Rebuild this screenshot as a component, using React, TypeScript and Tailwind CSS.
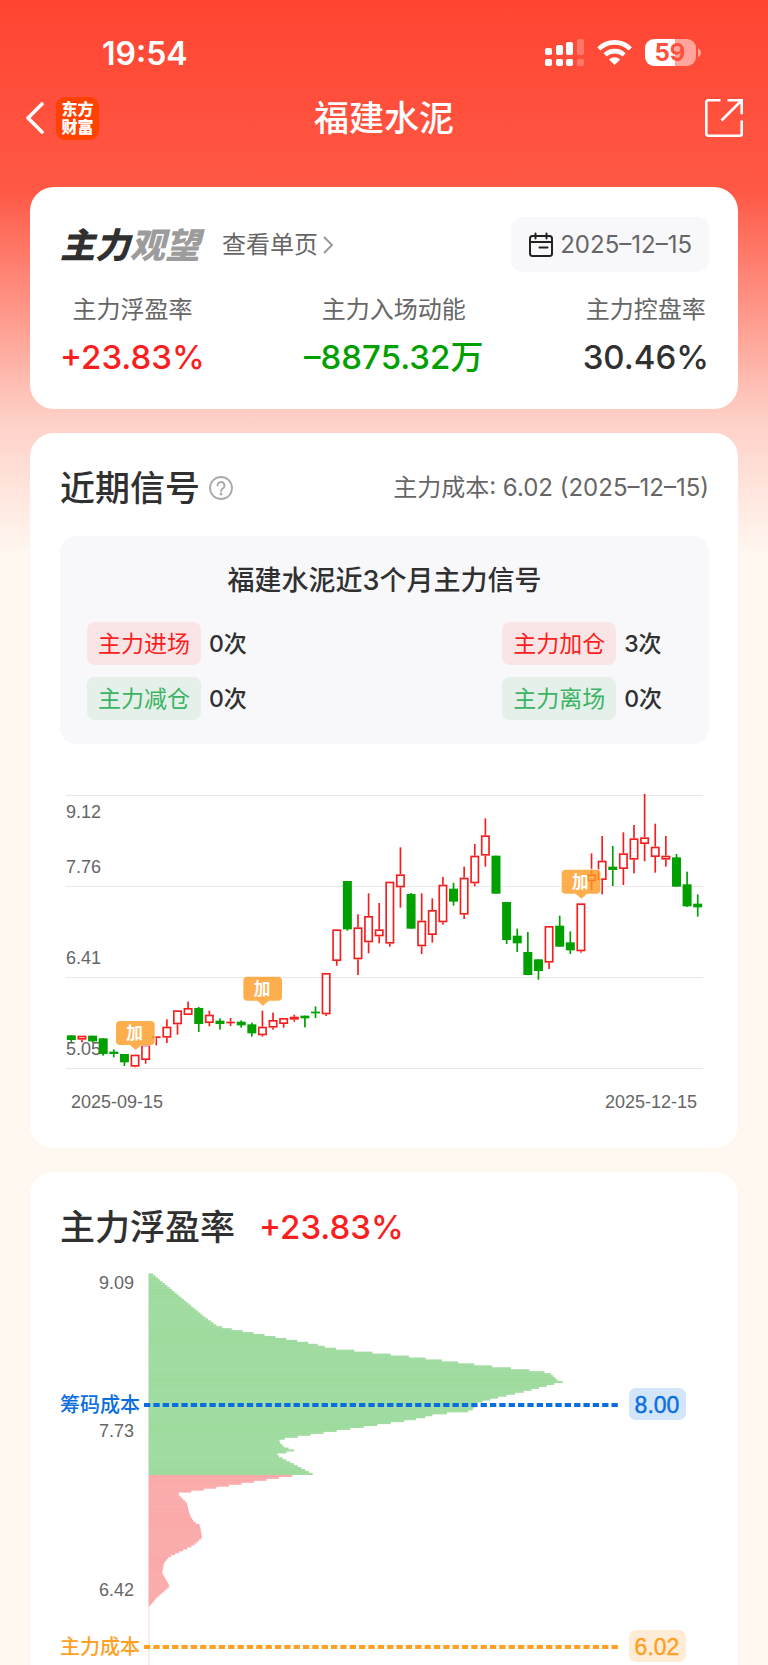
import type { ReactNode } from "react";

/* ================= DATA ================= */

type Candle = [color: "r" | "g", top: number, bottom: number, high: number, low: number];

// y values are in thirds of a pixel, from the top of the chart
const candles: Candle[] = [
  ["g", 766, 780, 766, 787], ["r", 767, 779, 767, 787], ["g", 767, 784, 767, 787],
  ["g", 775, 822, 775, 827], ["g", 815, 822, 808, 832], ["g", 822, 847, 822, 858],
  ["r", 824, 860, 824, 862], ["r", 794, 840, 794, 851], ["r", 769, 773, 769, 796],
  ["r", 740, 773, 718, 789], ["r", 691, 733, 691, 764], ["r", 684, 705, 665, 705],
  ["g", 684, 732, 681, 756], ["r", 704, 729, 692, 739], ["g", 722, 732, 715, 749],
  ["r", 725, 729, 714, 738], ["g", 725, 736, 721, 743], ["g", 733, 760, 728, 770],
  ["r", 740, 766, 692, 770], ["r", 720, 743, 698, 749], ["r", 714, 732, 714, 743],
  ["r", 710, 719, 704, 725], ["g", 707, 715, 707, 742], ["g", 695, 700, 679, 714],
  ["r", 579, 703, 579, 708], ["r", 448, 543, 448, 557], ["g", 303, 448, 303, 452],
  ["r", 442, 538, 403, 585], ["r", 408, 487, 340, 520], ["r", 448, 469, 369, 490],
  ["r", 305, 491, 305, 500], ["r", 283, 322, 202, 383], ["g", 342, 446, 339, 446],
  ["r", 422, 499, 340, 522], ["r", 390, 465, 355, 488], ["r", 314, 427, 291, 434],
  ["g", 326, 365, 308, 377], ["r", 293, 404, 260, 417], ["r", 227, 310, 192, 319],
  ["r", 166, 227, 115, 260], ["g", 227, 341, 227, 341], ["g", 366, 480, 366, 492],
  ["g", 467, 490, 446, 516], ["g", 516, 585, 456, 585], ["g", 538, 573, 538, 599],
  ["r", 438, 548, 438, 567], ["g", 437, 500, 407, 500], ["g", 487, 511, 454, 522],
  ["r", 370, 514, 370, 518], ["r", 283, 304, 220, 330], ["r", 242, 300, 168, 343],
  ["g", 260, 270, 198, 318], ["r", 220, 267, 157, 315], ["r", 175, 239, 135, 280],
  ["r", 172, 192, 42, 244], ["r", 200, 231, 131, 278], ["r", 227, 239, 168, 260],
  ["g", 232, 320, 222, 320], ["g", 313, 379, 275, 381], ["g", 371, 382, 343, 410],
];

const addMarks = [
  { x: 226, y: 723 },
  { x: 608, y: 590 },
  { x: 1563, y: 269 },
];

// [y, width] outline of the chip distribution, in thirds of a pixel
const chips: [number, number][] = [
  [34, 14], [159, 165], [189, 207], [195, 231], [243, 499], [255, 543], [282, 795],
  [306, 994], [324, 1166], [330, 1204], [351, 1227], [357, 1243], [362, 1220],
  [384, 1135], [402, 1056], [420, 985], [440, 972], [445, 959], [451, 893], [457, 849],
  [465, 822], [474, 769], [504, 562], [527, 409], [534, 390], [550, 405], [557, 422],
  [563, 439], [569, 410], [575, 382], [633, 493], [639, 427], [692, 87], [720, 115],
  [759, 125], [777, 137], [786, 154], [824, 161], [847, 135], [882, 62], [899, 47],
  [929, 41], [970, 64], [1004, 25], [1032, 1],
];

function chipWidth(y: number) {
  const next = chips.findIndex((p) => p[0] >= y);
  if (next <= 0) return chips[0][1];
  const [y0, w0] = chips[next - 1];
  const [y1, w1] = chips[next];
  return w0 + ((w1 - w0) * (y - y0)) / (y1 - y0);
}

const chipRows = Array.from({ length: 170 }, (_, i) => {
  const y = 34 + i * 5.87;
  return { y, width: chipWidth(y) };
});

const stats = [
  { label: "主力浮盈率", value: "+23.83%", color: "text-[#fa1e1e]" },
  { label: "主力入场动能", value: "–8875.32万", color: "text-[#00a000]" },
  { label: "主力控盘率", value: "30.46%", color: "text-[#303030]" },
];

/* ================= ICONS ================= */

function StatusIcons() {
  return (
    <svg viewBox="545 36 158 32" className="h-8 w-[158px]" fill="#fff">
      <rect x="545" y="47" width="7" height="7" rx="2" />
      <rect x="556" y="44" width="7" height="10" rx="2" />
      <rect x="566" y="41" width="7" height="13" rx="2" />
      <rect x="577" y="38" width="7" height="16" rx="2" opacity="0.25" />
      <rect x="545" y="58" width="7" height="7" rx="2" />
      <rect x="556" y="58" width="7" height="7" rx="2" />
      <rect x="566" y="58" width="7" height="7" rx="2" />
      <rect x="577" y="58" width="7" height="7" rx="2" opacity="0.25" />
      <g fill="none" stroke="#fff" strokeWidth="4.6">
        <path d="M598.9 47.8a22.4 22.4 0 0 1 31.4 0" />
        <path d="M605.1 53.9a13.8 13.8 0 0 1 19 0" />
      </g>
      <path d="M609 58.5a8.2 8.2 0 0 1 11.2 0L614.6 64z" />
      <path d="M654 38h21v27h-21a9 9 0 0 1-9-9v-9a9 9 0 0 1 9-9z" />
      <path d="M675 38h12a9 9 0 0 1 9 9v9a9 9 0 0 1-9 9h-12z" opacity="0.5" />
      <path d="M698 47.500c4 1.500 4 7 0 8.500z" opacity="0.5" />
      <text x="670" y="60" textAnchor="middle" fontSize="24" fontWeight="700" fill="#ff503d">
        59
      </text>
    </svg>
  );
}

function ShareIcon() {
  return (
    <svg viewBox="0 0 40 40" className="size-10" fill="none" stroke="#fff" strokeWidth="2.6">
      <path d="M16.500 2.300H4a1.700 1.700 0 0 0-1.700 1.700v32A1.700 1.700 0 0 0 4 37.700h32a1.700 1.700 0 0 0 1.700-1.700V22.500" />
      <path d="M23.500 2.300h14.200v14M37 3L17.500 22.500" />
    </svg>
  );
}

function CalendarIcon() {
  return (
    <svg viewBox="0 0 26 26" className="size-[26px]" fill="none" stroke="#222" strokeWidth="2" strokeLinecap="round">
      <rect x="2" y="4" width="22" height="20" rx="2.500" />
      <path d="M2 10h22M7.500 1.500v5M18.500 1.500v5M11.500 15.500h8" />
    </svg>
  );
}

/* ================= CHARTS ================= */

function CandleChart() {
  return (
    <svg viewBox="0 0 649 350" className="block w-full font-['Liberation_Sans',Arial,sans-serif]">
      {[15, 106, 197, 288].map((y) => (
        <rect key={y} x="6" y={y} width="637" height="1" fill="#e8e8e8" />
      ))}
      <g fontSize="18" fill="#666">
        <text x="6" y="38">9.12</text>
        <text x="6" y="93">7.76</text>
        <text x="6" y="184">6.41</text>
        <text x="6" y="275">5.05</text>
        <text x="11" y="328">2025-09-15</text>
        <text x="637" y="328" textAnchor="end">2025-12-15</text>
      </g>
      <g transform="scale(0.33333)">
        {candles.map(([color, top, bottom, high, low], i) => {
          const x = 34 + i * 31.85;
          if (color === "g") {
            return (
              <g key={i} fill="#00a000">
                <rect x={x - 2.5} y={high} width="5" height={low - high} />
                <rect x={x - 13.5} y={top} width="27" height={bottom - top} />
              </g>
            );
          }
          return (
            <g key={i} fill="#f51e1e">
              <rect x={x - 2.5} y={high} width="5" height={top - high} />
              <rect x={x - 2.5} y={bottom} width="5" height={low - bottom} />
              {bottom - top > 5 ? (
                <rect
                  x={x - 11}
                  y={top + 2.5}
                  width="22"
                  height={bottom - top - 5}
                  fill="none"
                  stroke="#f51e1e"
                  strokeWidth="5"
                />
              ) : (
                <rect x={x - 13} y={top} width="26" height="5" />
              )}
            </g>
          );
        })}
        {addMarks.map(({ x, y }) => (
          <g key={x}>
            <path
              d={`M${x - 46} ${y}h92q12 0 12 12v48q0 12-12 12h-28l-17 15-17-15h-30q-12 0-12-12v-48q0-12 12-12z`}
              fill="#ff9a22"
              fillOpacity="0.8"
              stroke="#fff"
              strokeOpacity="0.8"
              strokeWidth="5"
              paintOrder="stroke"
            />
            <text
              x={x - 2}
              y={y + 55}
              textAnchor="middle"
              fontSize="50"
              fontWeight="700"
              fill="#fff"
              className="font-['Noto_Sans_CJK_SC',sans-serif]"
            >
              加
            </text>
          </g>
        ))}
      </g>
    </svg>
  );
}

type CostLineProps = { y: number; label: string; value: string; color: string; tint: string };

function CostLine({ y, label, value, color, tint }: CostLineProps) {
  return (
    <g fill={color}>
      <text
        x="0"
        y={y + 7}
        fontSize="20"
        fontWeight="500"
        className="font-['Noto_Sans_CJK_SC',sans-serif]"
      >
        {label}
      </text>
      <path d={`M84 ${y}H558`} stroke={color} strokeWidth="4" strokeDasharray="6.300 3.050" />
      <rect x="569" y={y - 17} width="57" height="32" rx="7" fill={tint} />
      <text x="597" y={y + 8} fontSize="23" textAnchor="middle" stroke={color} strokeWidth="0.4">
        {value}
      </text>
    </g>
  );
}

function ChipChart() {
  return (
    <svg viewBox="0 0 649 403" className="block w-full font-['Liberation_Sans',Arial,sans-serif]">
      <g transform="translate(88.500 0) scale(0.33333)">
        {chipRows.map(({ y, width }) => (
          <rect
            key={y}
            x="0"
            y={y}
            width={width}
            height="6.300"
            fill={y < 635 ? "#00a000" : "#f51e1e"}
            fillOpacity="0.36"
          />
        ))}
        <rect x="0" y="1030" width="3" height="180" fill="#fbd5d5" />
      </g>
      <g fontSize="18" fill="#666" textAnchor="end">
        <text x="74" y="27">9.09</text>
        <text x="74" y="175">7.73</text>
        <text x="74" y="334">6.42</text>
      </g>
      <CostLine y={143} label="筹码成本" value="8.00" color="#0a6ee0" tint="#d2e5f9" />
      <CostLine y={385} label="主力成本" value="6.02" color="#ffa024" tint="#ffecd6" />
    </svg>
  );
}

/* ================= SMALL PARTS ================= */

function Signal({ name, count, up }: { name: string; count: number; up?: boolean }) {
  return (
    <div className="flex items-center gap-2 text-[23px]">
      <span
        className={
          up
            ? "flex h-[43px] w-[114px] items-center justify-center rounded-lg bg-[#fae5e6] pt-0.5 text-[#fa1e1e]"
            : "flex h-[43px] w-[114px] items-center justify-center rounded-lg bg-[#e5f0ea] pt-0.5 text-[#3cb464]"
        }
      >
        {name}
      </span>
      <span className="pt-0.5 font-medium text-[#303030]">{count}次</span>
    </div>
  );
}

function Title({ children }: { children: ReactNode }) {
  return <h2 className="text-[35px] leading-[48px] font-medium text-[#303030]">{children}</h2>;
}

/* ================= PAGE ================= */

export default function App() {
  return (
    <div className="flex min-h-screen flex-col bg-[#fff8f1] bg-[linear-gradient(#ff4532_0px,#ff5845_190px,#fed0c7_420px,#fff8f1_555px)] font-['Inter','Noto_Sans_CJK_SC',sans-serif]">
      {/* STATUS BAR */}
      <div className="flex items-center justify-between pt-8 pr-[65px] pl-[102px] text-white">
        <span className="pt-0.5 text-[32px] leading-10 font-semibold">19:54</span>
        <StatusIcons />
      </div>

      {/* NAV */}
      <header className="mt-[22px] grid h-11 grid-cols-[1fr_auto_1fr] items-center px-[24px] text-white">
        <div className="flex items-center gap-3">
          <button type="button" aria-label="返回">
            <svg viewBox="0 0 20 34" className="h-[34px] w-5" fill="none" stroke="#fff" strokeWidth="3.6" strokeLinecap="round" strokeLinejoin="round">
              <path d="M18 3L4 17l14 14" />
            </svg>
          </button>
          <div className="flex size-[43px] items-center justify-center rounded-[9px] bg-[#ff4200]">
            <p className="w-8 text-[16px] leading-[18px] font-black break-all">东方财富</p>
          </div>
        </div>
        <h1 className="text-[35px] leading-[44px] font-medium">福建水泥</h1>
        <button type="button" aria-label="分享" className="justify-self-end">
          <ShareIcon />
        </button>
      </header>

      <main className="mt-[47px] flex flex-1 flex-col gap-6 px-[30px]">
        {/* SUMMARY */}
        <section className="rounded-3xl bg-white pt-[30px] pr-[29px] pb-7 pl-[30px]">
          <div className="flex items-center">
            <div className="text-[35px] leading-[48px] font-black text-[#303030] italic">
              主力<span className="text-[#9c9c9c]">观望</span>
            </div>
            <a href="#detail" className="ml-[22px] flex items-center gap-1 text-[24px] text-[#666]">
              查看单页
              <svg viewBox="0 0 12 20" className="h-5 w-3" fill="none" stroke="#999" strokeWidth="2">
                <path d="M2 2l8 8-8 8" />
              </svg>
            </a>
            <button
              type="button"
              className="ml-auto flex h-[55px] items-center gap-1.5 rounded-xl bg-[#f8f8fb] px-[17px] text-[24px] text-[#666]"
            >
              <CalendarIcon />
              2025–12–15
            </button>
          </div>
          <dl className="mt-[22px] flex justify-between">
            {stats.map(({ label, value, color }) => (
              <div key={label} className="flex flex-col items-center gap-2">
                <dt className="text-[24px] leading-8 text-[#666]">{label}</dt>
                <dd className={`text-[33px] leading-[47px] font-medium ${color}`}>{value}</dd>
              </div>
            ))}
          </dl>
        </section>

        {/* SIGNALS */}
        <section className="rounded-3xl bg-white pt-[31px] pr-[29px] pb-[18px] pl-[30px]">
          <div className="flex items-center">
            <Title>近期信号</Title>
            <button type="button" aria-label="说明" className="ml-2">
              <svg viewBox="0 0 26 26" className="size-[26px]" fill="none" stroke="#aaa" strokeWidth="1.8">
                <circle cx="13" cy="13" r="11" />
                <path d="M9.500 10.500a3.500 3.500 0 1 1 5.200 3.100c-1.200.7-1.700 1.200-1.700 2.600" strokeLinecap="round" />
                <circle cx="13" cy="19" r="0.600" />
              </svg>
            </button>
            <p className="ml-auto text-[24px] text-[#666]">主力成本: 6.02 (2025–12–15)</p>
          </div>

          <div className="mt-6 rounded-2xl bg-[#f8f8fb] pt-[25px] pr-[47px] pb-6 pl-[27px]">
            <h3 className="pl-5 text-center text-[27px] leading-10 font-medium text-[#303030]">
              福建水泥近3个月主力信号
            </h3>
            <div className="mt-[21px] flex justify-between">
              <div className="flex flex-col gap-3">
                <Signal name="主力进场" count={0} up />
                <Signal name="主力减仓" count={0} />
              </div>
              <div className="flex flex-col gap-3">
                <Signal name="主力加仓" count={3} up />
                <Signal name="主力离场" count={0} />
              </div>
            </div>
          </div>

          <div className="mt-9">
            <CandleChart />
          </div>
        </section>

        {/* FLOATING PROFIT */}
        <section className="flex-1 rounded-t-3xl bg-white pt-[31px] pr-[29px] pl-[30px]">
          <div className="flex items-center gap-6">
            <Title>主力浮盈率</Title>
            <span className="text-[33px] leading-[48px] font-medium text-[#fa1e1e]">+23.83%</span>
          </div>
          <div className="mt-[11px]">
            <ChipChart />
          </div>
        </section>
      </main>
    </div>
  );
}
